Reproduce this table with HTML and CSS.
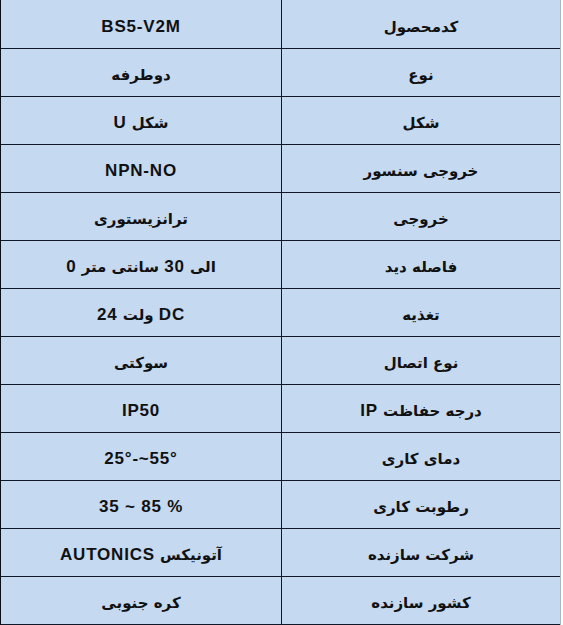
FILE: index.html
```html
<!DOCTYPE html>
<html lang="fa">
<head>
<meta charset="utf-8">
<title>مشخصات BS5-V2M</title>
<link rel="stylesheet" href="styles.css">
</head>
<body>
<div class="spec" dir="rtl">
  <div class="row first"><div class="label">کدمحصول</div><div class="value"><span class="lat">BS5-V2M</span></div></div>
  <div class="row"><div class="label">نوع</div><div class="value">دوطرفه</div></div>
  <div class="row"><div class="label">شکل</div><div class="value">شکل <span class="lat">U</span></div></div>
  <div class="row"><div class="label">خروجی سنسور</div><div class="value"><span class="lat">NPN-NO</span></div></div>
  <div class="row"><div class="label">خروجی</div><div class="value">ترانزیستوری</div></div>
  <div class="row"><div class="label">فاصله دید</div><div class="value">الی <span class="lat">30</span> سانتی متر <span class="lat">0</span></div></div>
  <div class="row"><div class="label">تغذیه</div><div class="value"><span class="lat">DC</span> ولت <span class="lat">24</span></div></div>
  <div class="row"><div class="label">نوع اتصال</div><div class="value">سوکتی</div></div>
  <div class="row"><div class="label">درجه حفاظت <span class="lat">IP</span></div><div class="value"><span class="lat">IP50</span></div></div>
  <div class="row"><div class="label">دمای کاری</div><div class="value" dir="ltr"><span class="lat">25°-~55°</span></div></div>
  <div class="row"><div class="label">رطوبت کاری</div><div class="value" dir="ltr"><span class="lat">35 ~ 85 %</span></div></div>
  <div class="row"><div class="label">شرکت سازنده</div><div class="value">آتونیکس <span class="lat">AUTONICS</span></div></div>
  <div class="row last"><div class="label">کشور سازنده</div><div class="value">کره جنوبی</div></div>
</div>
</body>
</html>
```

FILE: styles.css
```css
html, body {
  margin: 0;
  padding: 0;
  background: #ffffff;
}

.spec {
  width: 561px;
  box-sizing: border-box;
  border-left: 1px solid #0b0f19;
  border-right: 1px solid #a9b8c8;
  background: #c5d9f1;
  font-family: "DejaVu Sans", "Liberation Sans", sans-serif;
  font-weight: bold;
  color: #111111;
}

.row {
  display: grid;
  grid-template-columns: 278px 281px;
  height: 48px;
  box-sizing: border-box;
  border-top: 1px solid #0f1828;
}

.row.first {
  border-top: none;
}

.row.last {
  height: 49px;
  border-bottom: 1px solid #0f1828;
}

.label, .value {
  display: flex;
  align-items: center;
  justify-content: center;
  padding-top: 5px;
  box-sizing: border-box;
  font-size: 15px;
  white-space: pre;
}

.value {
  border-right: 1px solid #0f1828;
}

.lat {
  font-family: "Liberation Sans", Arial, sans-serif;
  font-size: 17px;
  letter-spacing: 0.8px;
}
```
